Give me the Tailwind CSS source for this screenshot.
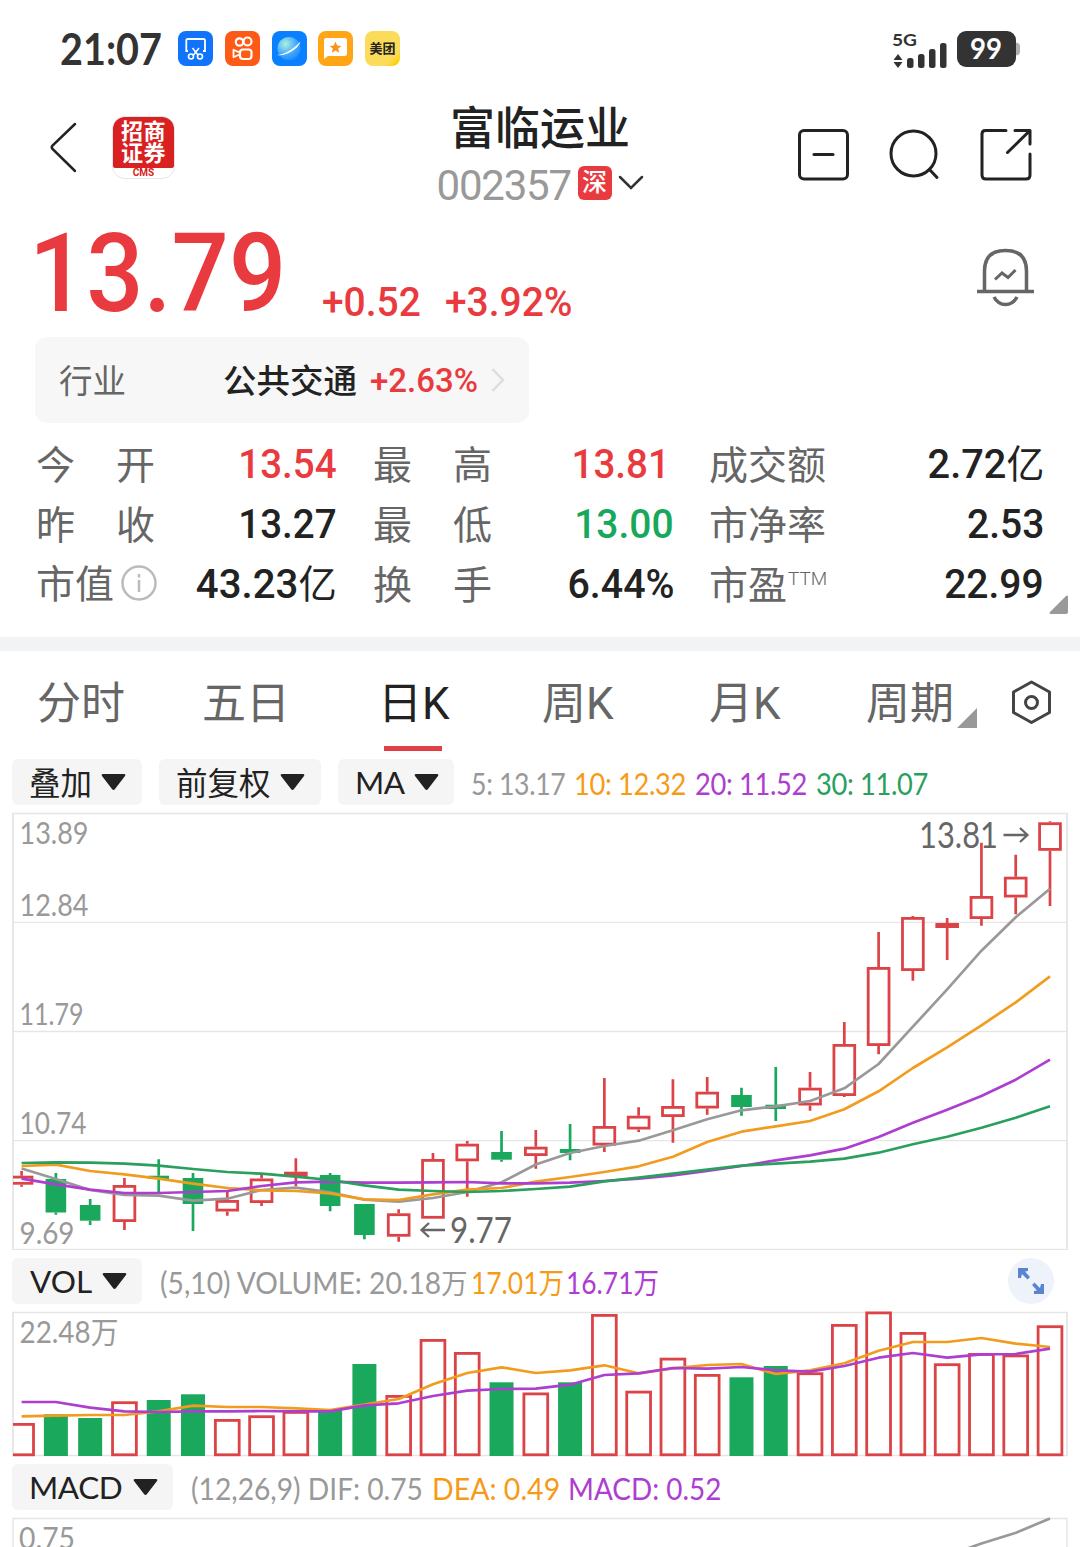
<!DOCTYPE html>
<html lang="zh-CN">
<head>
  <meta charset="UTF-8" />
  <title>富临运业 002357</title>
  <script src="https://cdn.jsdelivr.net/npm/@tailwindcss/browser@4"></script>
</head>
<body class="w-[1080px] h-[1547px] overflow-hidden bg-white text-[#222] font-['Roboto','Noto_Sans_CJK_SC',sans-serif]">

  <!-- Status bar -->
  <div class="h-[97px] pl-[60px] pr-[60px] flex items-center justify-between">
    <div class="flex items-center h-[35px]">
      <span class="w-[118px] origin-left scale-x-[.92] text-[43px] leading-none font-bold text-[#333] whitespace-nowrap font-['Lato',sans-serif]">21:07</span>
      <div class="flex gap-[11.750px]">
        <svg class="size-[35px]" viewBox="0 0 35 35" fill="none">
          <rect width="35" height="35" rx="8" fill="#0f73fb" />
          <path d="M10 20H8.300V9.500Q8.300 8 9.800 8H25.500Q27 8 27 9.500V20H25" stroke="#fff" stroke-width="1.800" />
          <path d="M14.500 17L20 24M21 17L15.500 24" stroke="#fff" stroke-width="1.600" />
          <circle cx="13" cy="25.500" r="2.500" stroke="#fff" stroke-width="1.600" />
          <circle cx="22" cy="25.500" r="2.500" stroke="#fff" stroke-width="1.600" />
        </svg>
        <svg class="size-[35px]" viewBox="0 0 35 35" fill="none" stroke="#fff" stroke-width="2.200">
          <rect width="35" height="35" rx="8" fill="#fd5a16" stroke="none" />
          <circle cx="14.500" cy="11" r="3.700" />
          <circle cx="22.500" cy="10.500" r="4" />
          <rect x="15" y="18.500" width="11.500" height="9.500" rx="3" />
          <path d="M14.500 21.500L8.500 18.800V26.200L14.500 23.500" stroke-width="1.800" stroke-linejoin="round" />
        </svg>
        <svg class="size-[35px]" viewBox="0 0 35 35" fill="none">
          <defs>
            <radialGradient id="planet" cx=".35" cy=".3" r=".8">
              <stop offset="0" stop-color="#aef0e0" />
              <stop offset=".6" stop-color="#3fa8ff" />
              <stop offset="1" stop-color="#1c86ff" />
            </radialGradient>
          </defs>
          <rect width="35" height="35" rx="8" fill="#0a80ff" />
          <circle cx="17" cy="17.500" r="11.500" fill="url(#planet)" />
          <path d="M5 24Q12 23.500 18.500 19T28.500 10.500Q27 16 19.500 20.500T5 24Z" fill="#fff" />
        </svg>
        <svg class="size-[35px]" viewBox="0 0 35 35">
          <rect width="35" height="35" rx="8" fill="#ffa516" />
          <path d="M8 7H27Q29 7 29 9V23Q29 25 27 25H10L6 28V9Q6 7 8 7Z" fill="#fff" />
          <path d="M17.500 10.500L19.200 14.600L23.400 14.900L20.200 17.600L21.200 21.800L17.500 19.500L13.800 21.800L14.800 17.600L11.600 14.900L15.800 14.600Z" fill="#f8941a" />
        </svg>
        <div class="size-[35px] rounded-[8px] bg-linear-to-br from-[#fbdc5a] from-75% to-[#ffd000] to-90% flex items-center justify-center text-[13px] leading-none font-bold text-[#222]">美团</div>
      </div>
    </div>
    <svg class="w-[130px] h-[44px] shrink-0" viewBox="890 27 130 44" fill="#333">
      <text x="892" y="46" font-size="17.500" font-weight="700" textLength="25" lengthAdjust="spacingAndGlyphs" font-family="Lato">5G</text>
      <path d="M898 54L902.500 60H893.500ZM898 68L902.500 62H893.500Z" />
      <rect x="907" y="58" width="6.500" height="10" rx="2.500" />
      <rect x="918" y="54" width="6.500" height="14" rx="2.500" />
      <rect x="929" y="49" width="6.500" height="19" rx="2.500" />
      <rect x="940" y="43" width="6.500" height="25" rx="2.500" />
      <path d="M1013 42.500H1016Q1020 43 1020 46V52Q1020 55 1016 55.500H1013Z" fill="#b0b0b0" />
      <rect x="957" y="31" width="59" height="36" rx="9" />
      <text x="970" y="59" font-size="29" font-weight="700" fill="#fff" textLength="32" lengthAdjust="spacingAndGlyphs" font-family="Lato">99</text>
    </svg>
  </div>

  <!-- Title bar -->
  <header class="h-[123px] flex justify-between pl-[49px] pr-[43px]">
    <div class="w-[341px] flex items-start gap-[34px] pt-[19px]">
      <svg class="w-[29px] h-[62px]" viewBox="49 116 29 62" fill="none" stroke="#222" stroke-width="2.500" stroke-linecap="round">
        <path d="M75 124L52.500 145.500Q51 147.200 52.500 149L75 171" />
      </svg>
      <div class="size-[63px] rounded-[13px] border border-[#e5e5e5] overflow-hidden bg-white text-center">
        <div class="h-[51px] pt-[4px] bg-[#d92121] rounded-b-[2px] text-white text-[22px] leading-[22px] tracking-[.5px] font-bold">招商<br />证券</div>
        <div class="text-[10px] leading-[10px] font-bold text-[#d92121]">CMS</div>
      </div>
    </div>
    <div class="flex flex-col items-center w-[300px] pt-[3px]">
      <h1 class="text-[45px] leading-[60px] font-medium whitespace-nowrap">富临运业</h1>
      <div class="flex items-center h-[56px] -mt-[2px]">
        <span class="w-[141px] text-[42px] leading-none tracking-[-1.200px] text-[#999]">002357</span>
        <span class="w-[34px] h-[34px] -mt-[6px] rounded-[6px] bg-[#e93b3f] text-white text-[25px] leading-[34px] text-center font-medium">深</span>
        <svg class="w-[26px] h-[16px] ml-[6px] -mt-[6px]" viewBox="0 0 26 16" fill="none" stroke="#333" stroke-width="2.500" stroke-linecap="round">
          <path d="M2 2L13 13L24 2" />
        </svg>
      </div>
    </div>
    <svg class="w-[240px] h-[60px] mt-[28px] ml-[107px] shrink-0" viewBox="797 125 240 60" fill="none" stroke="#222" stroke-width="3" stroke-linecap="round" stroke-linejoin="round">
      <rect x="799.500" y="130.500" width="48" height="48.500" rx="4.500" />
      <path d="M814 154.500H833" />
      <circle cx="913.500" cy="153.500" r="22.500" />
      <path d="M929.500 169.500L937 177.500" />
      <path d="M1006 130.500H985.500Q982 130.500 982 134V175Q982 179 986 179H1026Q1030 179 1030 175V154" />
      <path d="M1015 130.500H1030V144M1029.500 131L1007.500 152.500" />
    </svg>
  </header>

  <!-- Price -->
  <div class="h-[117px] pl-[35px] pr-[45px] flex justify-between text-[#e93b3f] font-medium">
    <div class="flex">
      <span class="w-[287px] -ml-[6px] mr-[6px] origin-left scale-x-[.925] text-[109px] leading-[109px]">13.79</span>
      <span class="w-[123px] pt-[60px] origin-left scale-x-[.95] text-[41px] leading-[45px] whitespace-nowrap">+0.52</span>
      <span class="pt-[60px] origin-left scale-x-[.95] text-[41px] leading-[45px] whitespace-nowrap">+3.92%</span>
    </div>
    <svg class="w-[60px] h-[60px] mt-[27px]" viewBox="975 247 60 60" fill="none" stroke="#666" stroke-width="3.500">
      <path d="M984.500 291V271Q984.500 250.500 1005.500 250.500T1026.500 271V291M977 291.500H1034M994 297Q998 304.500 1005.500 304.500T1017 297" />
      <path d="M995 279.500L1002 273L1008 277.500L1015.500 270" stroke-width="3" />
    </svg>
  </div>

  <!-- Industry -->
  <div class="ml-[35px] w-[494px] h-[86px] rounded-[12px] bg-[#f7f7f7] flex items-center pl-[24px] text-[33.500px] leading-none">
    <span class="w-[164px] pt-[3px] text-[#666]">行业</span>
    <span class="w-[147px] pt-[3px] font-medium">公共交通</span>
    <span class="w-[121px] origin-left scale-x-[.97] text-[#e93b3f] font-medium text-[34px]">+2.63%</span>
    <svg class="w-[14px] h-[24px]" viewBox="0 0 14 24" fill="none" stroke="#ddd" stroke-width="2.500"><path d="M1.500 1L12 12L1.500 23" /></svg>
  </div>

  <!-- Quote grid -->
  <div class="relative h-[214px] pt-[12px] pl-[36px] grid grid-cols-[301px_36px_301px_35px_335px] auto-rows-[60px] text-[39px] leading-[63px] whitespace-nowrap">
    <div class="flex justify-between"><span class="w-[119px] flex justify-between text-[#666]"><i class="not-italic">今</i><i class="not-italic">开</i></span><b class="origin-right scale-x-[.94] leading-[59px] font-medium text-[41px] text-[#e93b3f]">13.54</b></div><div></div>
    <div class="flex justify-between"><span class="w-[119px] flex justify-between text-[#666]"><i class="not-italic">最</i><i class="not-italic">高</i></span><b class="origin-right scale-x-[.94] leading-[59px] font-medium text-[41px] text-[#e93b3f] pr-[4px]">13.81</b></div><div></div>
    <div class="flex justify-between"><span class="text-[#666]">成交额</span><b class="origin-right scale-x-[.97] leading-[59px] font-medium text-[41px]">2.72<span class="text-[39px] font-normal">亿</span></b></div>

    <div class="flex justify-between"><span class="w-[119px] flex justify-between text-[#666]"><i class="not-italic">昨</i><i class="not-italic">收</i></span><b class="origin-right scale-x-[.94] leading-[59px] font-medium text-[41px]">13.27</b></div><div></div>
    <div class="flex justify-between"><span class="w-[119px] flex justify-between text-[#666]"><i class="not-italic">最</i><i class="not-italic">低</i></span><b class="origin-right scale-x-[.95] leading-[59px] font-medium text-[41px] text-[#18a85c]">13.00</b></div><div></div>
    <div class="flex justify-between"><span class="text-[#666]">市净率</span><b class="origin-right scale-x-[.95] leading-[59px] font-medium text-[41px]">2.53</b></div>

    <div class="flex justify-between">
      <span class="flex items-center gap-[7px] text-[#666]">市值
        <svg class="size-[36px] -mt-[4px]" viewBox="0 0 36 36" fill="none" stroke="#bbb" stroke-width="2.500"><circle cx="18" cy="18" r="16.500" /><path d="M18 15V27M18 9V12.500" /></svg>
      </span>
      <b class="origin-right scale-x-[.98] leading-[59px] font-medium text-[41px]">43.23<span class="text-[39px] font-normal">亿</span></b>
    </div><div></div>
    <div class="flex justify-between"><span class="w-[119px] flex justify-between text-[#666]"><i class="not-italic">换</i><i class="not-italic">手</i></span><b class="origin-right scale-x-[.96] leading-[59px] font-medium text-[41px]">6.44%</b></div><div></div>
    <div class="flex justify-between"><span class="flex text-[#666]">市盈<i class="not-italic pl-[1px] text-[19px] leading-[48px] font-light">TTM</i></span><b class="origin-right scale-x-[.95] leading-[59px] font-medium text-[41px]">22.99</b></div>
    <svg class="absolute right-[12px] bottom-[23px] size-[19px]" viewBox="0 0 19 19"><path d="M19 1V17Q19 19 17 19H1Q0 18.500 1 17L17 1Q18.500 0 19 1Z" fill="#999" /></svg>
  </div>
  <div class="h-[14px] bg-[#f2f3f5]"></div>

  <!-- Period tabs -->
  <nav class="h-[108px] flex pl-[37px] text-[44px] leading-[106px] text-[#666] whitespace-nowrap">
    <span class="w-[165px]">分时</span>
    <span class="w-[176px]">五日</span>
    <span class="relative w-[164px] text-[#222]">日K<i class="absolute left-[6px] top-[95px] w-[58px] h-[5px] bg-[#e04045]"></i></span>
    <span class="w-[167px]">周K</span>
    <span class="w-[157px]">月K</span>
    <span class="relative w-[146px]">周期<i class="absolute left-[91px] top-[57px] size-[20px] bg-[#999] [clip-path:polygon(100%_0,100%_100%,0_100%)]"></i></span>
    <svg class="w-[40px] h-[46px] mt-[28px]" viewBox="0 0 40 46" fill="none" stroke="#444" stroke-width="3" stroke-linejoin="round">
      <path d="M19.500 3L37.500 13V33.500L19.500 43.500L1.500 33.500V13Z" />
      <circle cx="19.500" cy="23.500" r="6" />
    </svg>
  </nav>

  <!-- Main chart toolbar -->
  <div class="h-[46px] flex items-center pl-[12px] text-[31.500px] leading-none whitespace-nowrap">
    <div class="w-[130px] h-full mr-[17px] pl-[17px] rounded-[6px] bg-[#f5f5f5] flex items-center gap-[9px]"><span class="pt-[5px]">叠加</span><svg class="w-[25px] h-[17px]" viewBox="0 0 25 17"><path d="M2 0H23Q25 0 24 2L14 15Q12.500 17 11 15L1 2Q0 0 2 0Z" fill="#222" /></svg></div>
    <div class="w-[162px] h-full mr-[17px] pl-[17px] rounded-[6px] bg-[#f5f5f5] flex items-center gap-[9px]"><span class="pt-[5px]">前复权</span><svg class="w-[25px] h-[17px]" viewBox="0 0 25 17"><path d="M2 0H23Q25 0 24 2L14 15Q12.500 17 11 15L1 2Q0 0 2 0Z" fill="#222" /></svg></div>
    <div class="w-[116px] h-full mr-[17px] pl-[17px] rounded-[6px] bg-[#f5f5f5] flex items-center justify-between pr-[15px] font-['Lato',sans-serif]"><span class="pt-[2px] tracking-[-.5px]">MA</span><svg class="w-[25px] h-[17px]" viewBox="0 0 25 17"><path d="M2 0H23Q25 0 24 2L14 15Q12.500 17 11 15L1 2Q0 0 2 0Z" fill="#222" /></svg></div>
    <div class="flex pt-[2px] text-[30px] tracking-[-.4px] font-['Lato',sans-serif]">
      <span class="w-[103px] origin-left scale-x-[.89] text-[#999]">5: 13.17</span>
      <span class="w-[121px] origin-left scale-x-[.91] text-[#f59b18]">10: 12.32</span>
      <span class="w-[121px] origin-left scale-x-[.91] text-[#ad3ed0]">20: 11.52</span>
      <span class="origin-left scale-x-[.91] text-[#2a9f5e]">30: 11.07</span>
    </div>
  </div>

  <!-- Candles -->
  <svg id="kline" class="block w-[1080px] h-[445px] font-['Lato','Noto_Sans_CJK_SC',sans-serif]" viewBox="0 805 1080 445" fill="none"></svg>

  <!-- Volume -->
  <div class="mt-[8px] h-[46px] flex items-center pl-[12px] text-[31.500px] leading-none whitespace-nowrap font-['Lato','Noto_Sans_CJK_SC',sans-serif]">
    <div class="w-[130px] h-full mr-[18px] pl-[18px] rounded-[6px] bg-[#f5f5f5] flex items-center justify-between pr-[15px]"><span class="pt-[2px]">VOL</span><svg class="w-[25px] h-[17px]" viewBox="0 0 25 17"><path d="M2 0H23Q25 0 24 2L14 15Q12.500 17 11 15L1 2Q0 0 2 0Z" fill="#222" /></svg></div>
    <div class="w-[848px] flex pt-[1px] text-[30px]">
      <span class="w-[311px] origin-left scale-x-[.94] text-[#999]">(5,10) VOLUME: 20.18<i class="not-italic text-[28px]">万</i></span>
      <span class="w-[95px] origin-left scale-x-[.88] text-[#f59b18]">17.01<i class="not-italic text-[29px]">万</i></span>
      <span class="origin-left scale-x-[.88] text-[#ad3ed0]">16.71<i class="not-italic text-[29px]">万</i></span>
    </div>
    <svg class="size-[46px]" viewBox="0 0 46 46" fill="#5b84d0">
      <circle cx="23" cy="23" r="23" fill="#edf2fb" />
      <path d="M10 10H20V13L17 13.500L22 19L19.500 21.500L14 16L13 20H10ZM36 36H26V33L29 32.500L24 27L26.500 24.500L32 30L33 26H36Z" />
    </svg>
  </div>
  <svg id="volume" class="block w-[1080px] h-[160px] font-['Lato','Noto_Sans_CJK_SC',sans-serif]" viewBox="0 1304 1080 160" fill="none"></svg>

  <!-- MACD -->
  <div class="h-[46px] flex items-center pl-[12px] text-[31.500px] leading-none whitespace-nowrap font-['Lato','Noto_Sans_CJK_SC',sans-serif]">
    <div class="w-[161px] h-full mr-[18px] pl-[17px] rounded-[6px] bg-[#f5f5f5] flex items-center justify-between pr-[15px]"><span class="pt-[2px] tracking-[-.4px]">MACD</span><svg class="w-[25px] h-[17px]" viewBox="0 0 25 17"><path d="M2 0H23Q25 0 24 2L14 15Q12.500 17 11 15L1 2Q0 0 2 0Z" fill="#222" /></svg></div>
    <div class="flex pt-[2px] text-[30px]">
      <span class="w-[241px] origin-left scale-x-[.94] text-[#999]">(12,26,9) DIF: 0.75</span>
      <span class="w-[136px] origin-left scale-x-[.95] text-[#f59b18]">DEA: 0.49</span>
      <span class="origin-left scale-x-[.93] text-[#ad3ed0]">MACD: 0.52</span>
    </div>
  </div>
  <svg class="block w-[1080px] h-[37px] font-['Lato',sans-serif]" viewBox="0 1510 1080 37" fill="none">
    <path d="M13 1560V1518.500H1067V1560" stroke="#e6e6e6" stroke-width="1.500" />
    <text x="19" y="1549" font-size="30" fill="#999" textLength="56" lengthAdjust="spacingAndGlyphs">0.75</text>
    <path d="M966 1549L981.400 1543.500L1016 1532.700L1050 1518.500" stroke="#999" stroke-width="2.700" />
  </svg>

  <script>
    const RED = "#db4347", GREEN = "#1aa85c";
    const x = i => 21.6 + i * 34.28;

    // [up, high, body top, body bottom, low]
    const candles = [
      [1,1171,1175.7,1184.7,1186.7],[0,1173,1179,1212.5,1214.7],[0,1199,1205,1220.7,1225],[1,1178,1185,1222,1230],
      [0,1159.3,1175.7,1179,1192],[0,1173,1178,1204,1231],[1,1191,1200,1211.5,1215.7],[1,1175,1178.5,1203,1206],
      [1,1158.3,1171.7,1177,1186],[0,1173,1175,1206,1211.3],[0,1204,1204,1235,1239.3],[1,1209.3,1213.3,1236.7,1241.7],
      [1,1153,1159,1218.7,1218.7],[1,1141,1143.7,1161.3,1196.7],[0,1131,1152,1159.7,1161.7],[1,1130,1146.7,1156,1168.7],
      [0,1124,1149,1153,1160.3],[1,1078,1126,1145.5,1152],[1,1107.3,1115.7,1129.5,1132],[1,1079.3,1106,1117,1142.7],
      [1,1077,1091.7,1108.5,1114.7],[0,1087.7,1095,1107,1115.7],[0,1067,1104.7,1109,1121],[1,1072,1087.7,1105.5,1110.7],
      [1,1022,1044,1096,1097],[1,932,967,1046,1054.3],[1,916,917,971,980.7],[1,918,923,928,960],
      [1,842.7,896,919,925.7],[1,854.7,876.7,897.5,914.3],[1,821.3,822.3,850.8,906]
    ];
    const ma = {
      "#999": [1168.5,1179,1190,1195,1195.7,1200.7,1198.7,1190,1187.7,1192.3,1199.7,1201.7,1198,1192,1182.3,1164.5,1153,1146,1140.7,1130.3,1119.3,1110.3,1106.3,1101,1088.3,1064,1026.7,989.3,950.7,917.3,888.7],
      "#f29c1f": [1166,1164.7,1171,1174.3,1178.7,1183.7,1188,1190.3,1191,1193.3,1199.3,1200,1194.3,1189.7,1188,1181.7,1177,1172,1166.3,1156.7,1142,1131.7,1126.3,1121,1109.3,1091.3,1068,1047.3,1025.3,1002.3,976.3],
      "#ad3ed0": [1178.7,1184.3,1189.7,1193,1193,1192,1191,1186,1182.3,1181.7,1182.7,1182.7,1182.3,1182,1183.3,1183.3,1182.7,1181,1178.7,1175.3,1171,1166,1160.3,1155.3,1148.7,1137,1122.7,1109.7,1096,1079.7,1059.7],
      "#2a9f5e": [1163,1162.3,1162.7,1163.7,1165.7,1169,1172,1173.7,1176.7,1180,1185.3,1189.7,1191,1192,1191,1189,1186.7,1181.3,1177.7,1173.7,1169.7,1165.7,1163.7,1161.7,1158.7,1152.7,1144.3,1136.7,1127.7,1117.7,1106.3]
    };
    const volTop = [1423,1414.3,1418,1401.3,1400,1394.3,1419,1415.3,1411,1410,1364,1395,1339,1352,1382.3,1392.5,1382.3,1314,1390.7,1357.7,1374,1377.3,1366,1372.3,1324,1311.5,1332,1363.3,1353,1354.5,1325.3];
    const volMa = {
      "#f29c1f": [1416.3,1415.7,1415,1415,1411.3,1405.7,1407,1407,1408.3,1410,1404.5,1399,1384.3,1373,1367.3,1373,1370.3,1365.3,1373.3,1368.3,1365,1364,1374,1370.3,1363.3,1350.7,1342,1342,1338,1343.7,1347],
      "#ad3ed0": [1402,1402,1407.7,1411.3,1412,1411.3,1411.3,1411,1411.3,1411.3,1405.3,1403.3,1396,1390.7,1389,1388.7,1384.7,1375,1373.3,1368,1368.7,1367,1370.3,1371.7,1366,1357.7,1353,1357.7,1354.3,1354,1348.7]
    };

    const rect = (l, t, w, h, attrs) => `<rect x="${l}" y="${t}" width="${w}" height="${h}" ${attrs} />`;
    const line = (d, c, w) => `<path d="${d}" stroke="${c}" stroke-width="${w}" />`;
    const series = set => Object.entries(set).map(([c, ys]) =>
      `<polyline points="${ys.map((y, i) => x(i) + "," + y).join(" ")}" stroke="${c}" stroke-width="2.7" stroke-linejoin="round" />`).join("");
    const label = (s, lx, ly, w, size, c) =>
      `<text x="${lx}" y="${ly}" font-size="${size}" fill="${c}" textLength="${w}" lengthAdjust="spacingAndGlyphs">${s}</text>`;

    // Price chart
    let k = '<clipPath id="frame"><rect x="13" y="800" width="1054" height="700" /></clipPath>';
    k += line("M12 813.5H1068M12 922.3H1068M12 1031.5H1068M12 1140.7H1068M12 1249.3H1068", "#e6e6e6", 1.3);
    k += line("M13 813V1250M1067 813V1250", "#e6e6e6", 1.8);
    [["13.89", 844, 69], ["12.84", 916, 69], ["11.79", 1025, 64], ["10.74", 1134, 67], ["9.69", 1244, 55]]
      .forEach(([s, y, w]) => k += label(s, 19.5, y, w, 30, "#999"));
    k += '<g clip-path="url(#frame)">';
    candles.forEach(([up, hi, top, bot, lo], i) => {
      const c = up ? RED : GREEN;
      k += line(`M${x(i)} ${hi}V${top}M${x(i)} ${bot}V${lo}`, c, 2.7);
      k += up ? rect(x(i) - 10.4, top + 1.4, 20.8, Math.max(bot - top - 2.8, 1), `stroke="${c}" stroke-width="2.8"`)
              : rect(x(i) - 10.3, top, 20.6, bot - top, `fill="${c}"`);
    });
    k += "</g>" + series(ma);
    k += label("13.81", 919, 848, 79, 36, "#666") + line("M1003.500 835H1027M1020 828L1027.500 835L1020 842", "#666", 2.3);
    k += label("9.77", 450, 1243, 62, 36, "#666") + line("M445 1230H422M429 1223L421.500 1230L429 1237", "#666", 2.3);
    document.getElementById("kline").innerHTML = k;

    // Volume chart
    let v = line("M12 1312.500H1068M12 1455.500H1068", "#e6e6e6", 1.3) + line("M13 1312V1456M1067 1312V1456", "#e6e6e6", 1.8);
    v += label("22.48万", 19.5, 1343, 99, 30, "#999");
    v += '<g clip-path="url(#frame)">';
    volTop.forEach((t, i) => {
      v += candles[i][0] ? rect(x(i) - 11.9, t + 1.4, 23.8, 1454.8 - t - 1.4, `stroke="${RED}" stroke-width="2.8"`)
                         : rect(x(i) - 12, t, 24, 1456 - t, `fill="${GREEN}"`);
    });
    v += "</g>" + series(volMa);
    document.getElementById("volume").innerHTML = v;
  </script>
</body>
</html>
